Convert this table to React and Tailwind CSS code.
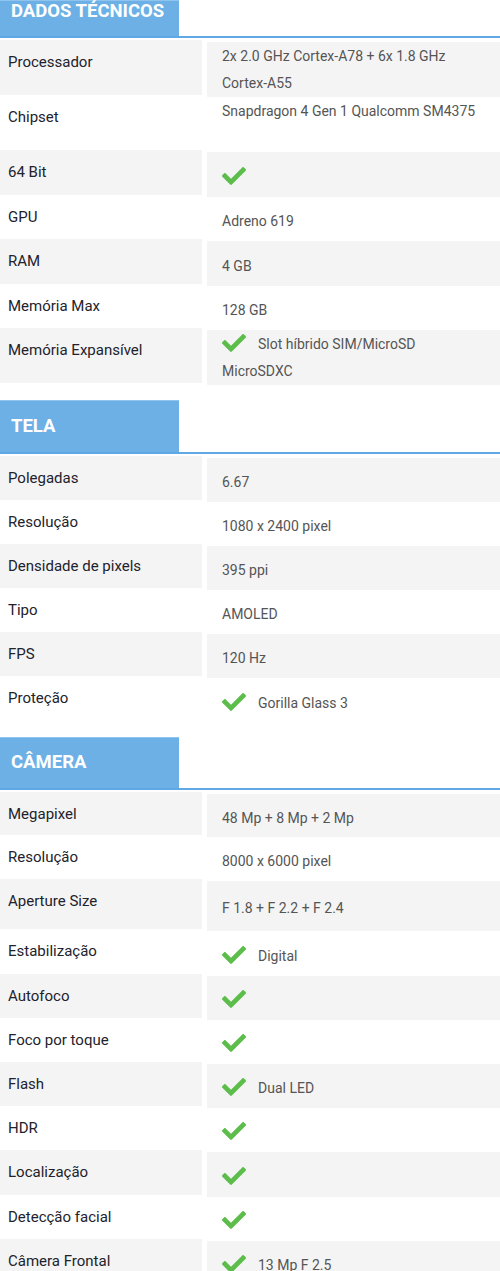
import React from "react";
import { FaCheck } from "react-icons/fa";

const Check = ({ withText }) => (
  <FaCheck
    className={`inline-block align-[-6px] text-[#5cbd4b] ${withText ? "mr-[12px]" : ""}`}
    size={24}
  />
);

const sections = [
  {
    title: "DADOS TÉCNICOS",
    hh: "h-[36px] pb-[14px]",
    extra: "pb-[1px]",
    rows: [
      { l: "Processador", v: <>2x 2.0 GHz Cortex-A78 + 6x 1.8 GHz<br />Cortex-A55</>, two: true },
      { l: "Chipset", v: <>Snapdragon 4 Gen 1 Qualcomm SM4375<br />&nbsp;</>, two: true },
      { l: "64 Bit", v: <Check />, h: "min-h-[45px]" },
      { l: "GPU", v: "Adreno 619", h: "min-h-[44px]" },
      { l: "RAM", v: "4 GB", h: "min-h-[45px]" },
      { l: "Memória Max", v: "128 GB", h: "min-h-[44px]" },
      { l: "Memória Expansível", v: <><Check withText />Slot híbrido SIM/MicroSD<br />MicroSDXC</>, two: true },
    ],
  },
  {
    title: "TELA",
    hh: "h-[52px]",
    extra: "",
    rows: [
      { l: "Polegadas", v: "6.67", h: "min-h-[44px]" },
      { l: "Resolução", v: "1080 x 2400 pixel", h: "min-h-[44px]" },
      { l: "Densidade de pixels", v: "395 ppi", h: "min-h-[44px]" },
      { l: "Tipo", v: "AMOLED", h: "min-h-[44px]" },
      { l: "FPS", v: "120 Hz", h: "min-h-[44px]" },
      { l: "Proteção", v: <><Check withText />Gorilla Glass 3</>, h: "min-h-[45px]" },
    ],
  },
  {
    title: "CÂMERA",
    hh: "h-[51px]",
    extra: "",
    rows: [
      { l: "Megapixel", v: "48 Mp + 8 Mp + 2 Mp", h: "min-h-[43px]" },
      { l: "Resolução", v: "8000 x 6000 pixel", h: "min-h-[44px]" },
      { l: "Aperture Size", v: "F 1.8 + F 2.2 + F 2.4", h: "min-h-[50px]" },
      { l: "Estabilização", v: <><Check withText />Digital</>, h: "min-h-[45px]" },
      { l: "Autofoco", v: <Check />, h: "min-h-[44px]" },
      { l: "Foco por toque", v: <Check />, h: "min-h-[44px]" },
      { l: "Flash", v: <><Check withText />Dual LED</>, h: "min-h-[44px]" },
      { l: "HDR", v: <Check />, h: "min-h-[44px]" },
      { l: "Localização", v: <Check />, h: "min-h-[45px]" },
      { l: "Detecção facial", v: <Check />, h: "min-h-[44px]" },
      { l: "Câmera Frontal", v: <><Check withText />13 Mp F 2.5</>, h: "min-h-[44px]" },
    ],
  },
];

function Row({ row, gray }) {
  const bg = gray ? "bg-[#f4f4f4]" : "bg-white";
  const val = row.two
    ? "min-h-[55px] pt-[1px] leading-[27px]"
    : `${row.h} pt-[6px] leading-[27.5px]`;
  return (
    <div className="flex">
      <div className={`w-[202px] shrink-0 pl-[8px] pt-[12px] text-[15px] leading-[20px] font-normal text-[#22222c] ${bg}`}>
        {row.l}
      </div>
      <div
        className={`ml-[5px] flex-1 mt-[2px] -mb-[2px] pl-[15px] pr-2 flex items-center text-[14px] text-[#555555] ${val} ${bg}`}
      >
        <div>{row.v}</div>
      </div>
    </div>
  );
}

function Section({ s }) {
  return (
    <section className={`flex flex-col ${s.extra}`}>
      <div className="flex border-b-2 border-[#5fa8e5]">
        <div
          className={`w-[179px] ${s.hh} bg-[#6cb0e6] border-t border-[#8ec4ee] pl-[11px] flex items-center text-white font-bold text-[18.5px]`}
        >
          {s.title}
        </div>
      </div>
      <div className="flex flex-col pt-[2px]">
        {s.rows.map((r, i) => (
          <Row key={i} row={r} gray={i % 2 === 0} />
        ))}
      </div>
    </section>
  );
}

export default function App() {
  return (
    <div className="w-[500px] h-[1271px] overflow-hidden bg-white flex flex-col gap-4 font-['Roboto',_'Liberation_Sans',_sans-serif]">
      {sections.map((s, i) => (
        <Section key={i} s={s} />
      ))}
    </div>
  );
}
